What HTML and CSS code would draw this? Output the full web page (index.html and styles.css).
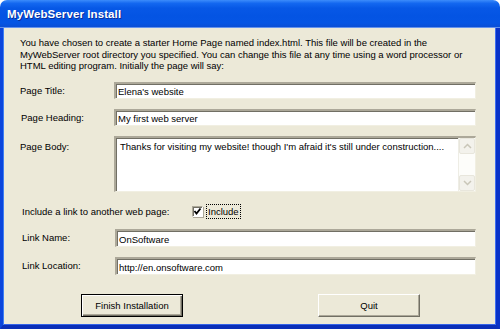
FILE: index.html
```html
<!DOCTYPE html>
<html lang="en">
<head>
    <meta charset="UTF-8">
    <title>MyWebServer Install</title>
    <link rel="stylesheet" href="styles.css">
</head>
<body>

<div class="window">
    <div class="titlebar">
        <span class="title">MyWebServer Install</span>
    </div>
    <div class="frame">
        <div class="client">
            <p class="intro">
                You have chosen to create a starter Home Page named index.html. This file will be created in the<br>
                MyWebServer root directory you specified. You can change this file at any time using a word processor or<br>
                HTML editing program. Initially the page will say:
            </p>

            <div class="row row-title">
                <label class="label">Page Title:</label>
                <div class="field">Elena's website</div>
            </div>
            <div class="row row-heading">
                <label class="label label-shift">Page Heading:</label>
                <div class="field">My first web server</div>
            </div>
            <div class="row row-body">
                <label class="label label-top">Page Body:</label>
                <div class="field field-area">
                    <div class="area-text">Thanks for visiting my website! though I'm afraid it's still under construction....</div>
                    <div class="scrollbar">
                        <div class="scroll-btn">
                            <svg width="9" height="6" viewBox="0 0 9 6"><path d="M1 5 L4.5 1.5 L8 5" fill="none" stroke="#c9c6b8" stroke-width="1.5"/></svg>
                        </div>
                        <div class="scroll-track"></div>
                        <div class="scroll-btn">
                            <svg width="9" height="6" viewBox="0 0 9 6"><path d="M1 1 L4.5 4.5 L8 1" fill="none" stroke="#c9c6b8" stroke-width="1.5"/></svg>
                        </div>
                    </div>
                </div>
            </div>

            <div class="row row-check">
                <span class="check-label">Include a link to another web page:</span>
                <span class="checkbox">
                    <svg width="9" height="9" viewBox="0 0 9 9"><path d="M1.5 4 L3.5 6.5 L7.5 1.5" fill="none" stroke="#000" stroke-width="1.8"/></svg>
                </span>
                <span class="check-text">Include</span>
            </div>

            <div class="row row-linkname">
                <label class="label label-link">Link Name:</label>
                <div class="field field-link">OnSoftware</div>
            </div>
            <div class="row row-linkloc">
                <label class="label label-link">Link Location:</label>
                <div class="field field-link">http://en.onsoftware.com</div>
            </div>

            <div class="buttons">
                <button class="btn btn-default">Finish Installation</button>
                <button class="btn">Quit</button>
            </div>
        </div>
    </div>
</div>

</body>
</html>
```

FILE: styles.css
```css
:root {
    --face-color: #ece9d8;
    --frame-blue: #0842d4;
    --shadow-color: #aca899;
    --dark-shadow: #716f64;
    --highlight: #ffffff;
}

body, html {
    margin: 0;
    height: 100%;
    background: #ffffff;
    font-family: "Liberation Sans", Arial, sans-serif;
    font-size: 9.5px;
    color: #000;
}

.window {
    width: 500px;
    height: 329px;
    display: flex;
    flex-direction: column;
}

.titlebar {
    height: 27px;
    flex: none;
    border-radius: 7px 7px 0 0;
    background: linear-gradient(180deg, #3c8cfb 0%, #1468f0 12%, #0758e6 30%, #0454e3 60%, #0555e4 85%, #0a4fd6 100%);
    display: flex;
    align-items: center;
    padding-left: 7px;
    border-bottom: 1px solid #6493ee;
}

.title {
    color: #ffffff;
    font-weight: bold;
    font-size: 11.5px;
    text-shadow: 1px 1px 0 #0c2f9a;
    letter-spacing: 0.1px;
}

.frame {
    flex: 1;
    display: flex;
    border-left: 3px solid #0b45dc;
    border-right: 4px solid #0832c8;
    border-bottom: 4px solid #0a2fb8;
    box-shadow: inset 1px 0 0 #3d7ef3, inset -1px 0 0 #3d6ef0, inset 0 -1px 0 #3463e8;
}

.client {
    flex: 1;
    background: var(--face-color);
    margin: 0 1px 1px 1px;
    padding: 9px 19px 0 16px;
}

.intro {
    margin: 0;
    line-height: 11.5px;
}

.row {
    display: flex;
    align-items: center;
}

.row-title {
    margin-top: 10px;
}

.row-heading {
    margin-top: 10px;
}

.row-body {
    margin-top: 10px;
    align-items: flex-start;
}

.row-check {
    margin-top: 13px;
    padding-left: 2px;
}

.row-linkname {
    margin-top: 11px;
}

.row-linkloc {
    margin-top: 10px;
}

.label {
    width: 94px;
    flex: none;
}

.label-shift {
    padding-left: 1px;
    width: 93px;
}

.label-top {
    padding-top: 5px;
}

.label-link {
    padding-left: 2px;
    width: 93px;
}

.field {
    flex: 1;
    height: 17px;
    box-sizing: border-box;
    background: #ffffff;
    border-top: 2px solid var(--shadow-color);
    border-left: 2px solid var(--shadow-color);
    border-bottom: 1px solid #f1efe2;
    border-right: 1px solid #f1efe2;
    box-shadow: inset 1px 1px 0 var(--dark-shadow);
    padding: 2px 0 0 2px;
    line-height: 12px;
    white-space: nowrap;
}

.field-link {
    height: 18px;
    padding-top: 3px;
}

.field-area {
    height: 56px;
    display: flex;
    padding: 0;
}

.area-text {
    flex: 1;
    padding: 3px 0 0 4px;
}

.scrollbar {
    width: 16px;
    display: flex;
    flex-direction: column;
    background: #fdfdfa;
    border-left: 1px solid #eeede5;
}

.scroll-btn {
    height: 16px;
    box-sizing: border-box;
    border: 1px solid #e8e6dc;
    border-radius: 2px;
    background: #f3f2ec;
    display: flex;
    align-items: center;
    justify-content: center;
}

.scroll-track {
    flex: 1;
}

.check-label {
    width: 170px;
    flex: none;
}

.checkbox {
    width: 11px;
    height: 11px;
    box-sizing: border-box;
    background: #ffffff;
    border-top: 1px solid var(--shadow-color);
    border-left: 1px solid var(--shadow-color);
    border-bottom: 1px solid #ffffff;
    border-right: 1px solid #ffffff;
    box-shadow: inset 1px 1px 0 var(--dark-shadow), 1px 1px 0 var(--shadow-color);
    display: flex;
    align-items: center;
    justify-content: center;
}

.check-text {
    margin-left: 4px;
    padding: 1px 1px;
    outline: 1px dotted #000;
    outline-offset: 0;
}

.buttons {
    display: flex;
    margin-top: 19px;
    padding-left: 61px;
    gap: 135px;
}

.btn {
    width: 102px;
    height: 23px;
    box-sizing: border-box;
    font-family: "Liberation Sans", Arial, sans-serif;
    font-size: 9.5px;
    color: #000;
    background: var(--face-color);
    border-top: 1px solid var(--highlight);
    border-left: 1px solid var(--highlight);
    border-bottom: 1px solid var(--dark-shadow);
    border-right: 1px solid var(--dark-shadow);
    box-shadow: inset -1px -1px 0 var(--shadow-color);
    padding: 0;
}

.btn-default {
    border: 1px solid #000;
    box-shadow: inset 1px 1px 0 var(--highlight), inset -1px -1px 0 var(--dark-shadow), inset -2px -2px 0 var(--shadow-color);
}
```
